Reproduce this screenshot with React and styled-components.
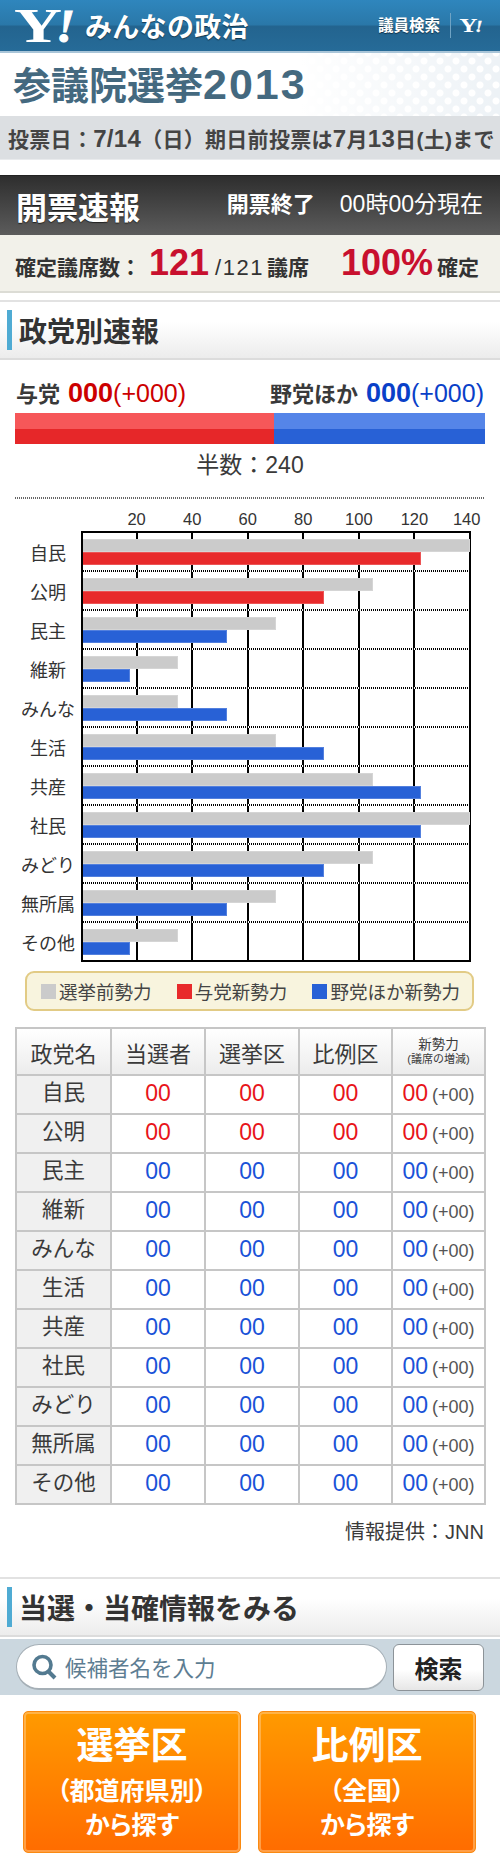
import React from 'react';
import styled, { createGlobalStyle } from 'styled-components';

const GlobalStyle = createGlobalStyle`
  html, body {
    margin: 0;
    padding: 0;
    background: #fff;
  }
  body {
    width: 500px;
    font-family: "Liberation Sans", "Noto Sans CJK JP", sans-serif;
    color: #333;
  }
`;

const Page = styled.div`
  width: 500px;
  height: 1870px;
  overflow: hidden;
  background: #fff;
`;

const Header = styled.header`
  display: flex;
  align-items: center;
  justify-content: space-between;
  box-sizing: border-box;
  height: 53px;
  padding: 0 17px 0 14px;
  background: linear-gradient(to bottom, #2f86bd 0%, #2a78a9 48%, #23648f 52%, #266b98 100%);
  border-bottom: 2px solid #a9c5d8;
`;

const Brand = styled.div`
  display: flex;
  align-items: center;
  gap: 9px;
`;

const BrandName = styled.span`
  color: #fff;
  font-size: 27px;
  font-weight: 700;
  letter-spacing: 0.3px;
  text-shadow: 0 1px 1px rgba(0, 0, 0, 0.5);
`;

const HeaderLinks = styled.div`
  display: flex;
  align-items: center;
`;

const HeaderLink = styled.span`
  color: #fff;
  font-size: 15.5px;
  font-weight: 700;
  padding-right: 10px;
  margin-right: 8px;
  border-right: 1px solid #6fa3c4;
  line-height: 25px;
  text-shadow: 0 1px 1px rgba(0, 0, 0, 0.5);
`;

const TitleRow = styled.div`
  box-sizing: border-box;
  height: 63px;
  padding-left: 13px;
  display: flex;
  align-items: center;
  background-color: #edf2f6;
  background-image:
    linear-gradient(to right, #fff 60%, rgba(255, 255, 255, 0) 100%),
    radial-gradient(circle, #fff 3px, transparent 4px),
    radial-gradient(circle, #fff 3px, transparent 4px);
  background-size: 100% 100%, 16px 16px, 16px 16px;
  background-position: 0 0, 0 0, 8px 8px;
`;

const Title = styled.h1`
  margin: 0;
  font-size: 38px;
  font-weight: 700;
  color: #44697f;
  line-height: 1;
  span {
    font-size: 43px;
    letter-spacing: 2px;
  }
`;

const Notice = styled.div`
  box-sizing: border-box;
  height: 44px;
  padding-left: 8px;
  display: flex;
  align-items: center;
  background: #dcdfe2;
  border-bottom: 1px solid #e9ebed;
  font-size: 21px;
  font-weight: 700;
  letter-spacing: 0.3px;
  text-spacing-trim: space-all;
  color: #444;
  white-space: pre;
`;

const Num = styled.span`
  font-size: 24px;
`;

const ResultBar = styled.div`
  box-sizing: border-box;
  margin-top: 15px;
  height: 60px;
  padding: 0 17px 0 16px;
  display: flex;
  align-items: center;
  justify-content: space-between;
  background: linear-gradient(to bottom, #2e2e2e, #5c5c5c);
  border-top: 1px solid #222;
  color: #fff;
`;

const ResultTitle = styled.span`
  font-size: 31px;
  font-weight: 700;
  text-shadow: 0 1px 1px rgba(0, 0, 0, 0.6);
`;

const ResultState = styled.span`
  font-size: 23px;
  margin-top: -7px;
  b {
    font-size: 22px;
    margin-right: 25px;
  }
`;

const SeatBar = styled.div`
  box-sizing: border-box;
  height: 58px;
  padding: 0 21px 0 15px;
  display: flex;
  align-items: baseline;
  justify-content: space-between;
  background: #f2f1ea;
  border-bottom: 2px solid #dcdcd5;
  color: #333;
  font-size: 21px;
  font-weight: 700;
  line-height: 56px;
`;

const SeatGroup = styled.span`
  white-space: nowrap;
`;

const BigRed = styled.span`
  font-size: 36px;
  color: #c8102e;
  margin: 0 ${(p) => p.$after || 0}px 0 ${(p) => p.$gap || 0}px;
`;

const SeatOf = styled.span`
  font-size: 22px;
  font-weight: 400;
  letter-spacing: 1.5px;
  margin: 0 3px 0 6px;
`;

const SectionHead = styled.h2`
  box-sizing: border-box;
  display: flex;
  align-items: center;
  height: 60px;
  margin: ${(p) => p.$top}px 0 0;
  padding-left: 7px;
  gap: 7px;
  font-size: 28px;
  font-weight: 700;
  color: #333;
  background: linear-gradient(to bottom, #fff 35%, #ececec 100%);
  border-top: 2px solid #e2e2e2;
  border-bottom: 2px solid #dcdcdc;
  &::before {
    content: "";
    width: 5px;
    height: 40px;
    background: #4fabd3;
  }
`;

const Blocs = styled.div`
  display: flex;
  justify-content: space-between;
  align-items: baseline;
  margin: 13px 16px 0;
  height: 40px;
  font-size: 22px;
  font-weight: 700;
  color: #3a3a3a;
  line-height: 40px;
`;

const BlocCount = styled.span`
  color: ${(p) => p.$color};
  margin-left: 8px;
  b {
    font-size: 27px;
  }
  small {
    font-size: 25px;
    font-weight: 400;
  }
`;

const SeatMeter = styled.div`
  display: flex;
  margin: 0 15px;
  height: 31px;
`;

const MeterPart = styled.div`
  background: linear-gradient(
    to bottom,
    ${(p) => p.$light} 50%,
    ${(p) => p.$dark} 50%
  );
`;

const Half = styled.div`
  text-align: center;
  font-size: 23px;
  line-height: 30px;
  margin-top: 6px;
  color: #3a3a3a;
`;

const DotLine = styled.div`
  margin: 17px 15px 0;
  height: 2px;
  background: repeating-linear-gradient(to right, #666 0 1px, transparent 1px 2px);
`;

const Axis = styled.div`
  display: grid;
  grid-template-columns: repeat(7, 55.57px);
  margin: 10px 0 0 81px;
  height: 22px;
`;

const AxisLabel = styled.span`
  text-align: center;
  font-size: 16.5px;
  line-height: 20px;
  color: #333;
  transform: translateX(${(p) => (p.$last ? 24.5 : 27.8)}px);
`;

const Chart = styled.div`
  display: flex;
`;

const ChartLabels = styled.div`
  box-sizing: border-box;
  width: 81px;
  height: 431px;
  padding: 4px 6px 0 21px;
  flex: none;
`;

const ChartLabel = styled.div`
  height: 39px;
  line-height: 39px;
  text-align: center;
  font-size: 18px;
  color: #333;
  white-space: nowrap;
`;

const Plot = styled.div`
  box-sizing: border-box;
  width: 390px;
  border: 2px solid #000;
  background: repeating-linear-gradient(
    to right,
    #000 0,
    #000 1px,
    transparent 1px,
    transparent 54.57px,
    #000 54.57px,
    #000 55.57px
  );
  background-origin: border-box;
`;

const PlotRow = styled.div`
  box-sizing: border-box;
  height: ${(p) => (p.$last ? 37 : 39)}px;
  padding-top: 6px;
  background: ${(p) => (p.$last
    ? 'none'
    : 'repeating-linear-gradient(to right, #000 0 1px, #fff 1px 2px) left bottom / 100% 2px no-repeat')};
`;

const Bar = styled.div`
  height: 13px;
  box-sizing: border-box;
  background: ${(p) => p.$color};
  border: 1px solid rgba(255, 255, 255, 0.2);
  border-left: none;
`;

const Legend = styled.div`
  box-sizing: border-box;
  display: flex;
  align-items: center;
  justify-content: space-between;
  margin: 9px 26px 0 25px;
  height: 40px;
  padding: 0 12px 0 14px;
  background: #f8f4de;
  border: 2px solid #e2cb85;
  border-radius: 9px;
  font-size: 18.5px;
  color: #444;
`;

const LegendItem = styled.span`
  display: flex;
  align-items: center;
  gap: 3px;
  &::before {
    content: "";
    width: 15px;
    height: 15px;
    background: ${(p) => p.$color};
  }
`;

const Table = styled.table`
  table-layout: fixed;
  border-collapse: collapse;
  margin: 16px 0 0 15px;
  width: 469px;
  border: 2px solid #c6c6c6;
`;

const Th = styled.th`
  height: 45px;
  padding: 0;
  font-size: 22px;
  font-weight: 400;
  color: #3a3a3a;
  background: linear-gradient(to bottom, #fff, #ececec);
  border: 2px solid #c6c6c6;
`;

const ThSmall = styled.div`
  font-size: 13.5px;
  line-height: 14px;
  small {
    display: block;
    font-size: 11px;
  }
`;

const NameCell = styled.td`
  height: 33px;
  padding: 0 0 4px;
  text-align: center;
  font-size: 21.5px;
  line-height: 30px;
  color: #3a3a3a;
  background: #f0f0f0;
  border: 2px solid #c6c6c6;
`;

const Td = styled.td`
  padding: 0 0 4px;
  text-align: center;
  font-size: 23px;
  line-height: 30px;
  color: ${(p) => p.$color};
  border: 2px solid #c6c6c6;
  small {
    font-size: 18px;
    line-height: 1;
    color: #555;
    margin-left: 4px;
  }
`;

const Credit = styled.div`
  margin: 13px 16px 0 0;
  text-align: right;
  font-size: 20px;
  line-height: 28px;
  color: #3a3a3a;
`;

const SearchBand = styled.div`
  box-sizing: border-box;
  display: flex;
  justify-content: space-between;
  align-items: center;
  height: 56px;
  margin-top: 2px;
  padding: 0 16px;
  background: #cbd7df;
`;

const SearchBox = styled.div`
  box-sizing: border-box;
  display: flex;
  align-items: center;
  gap: 8px;
  width: 371px;
  height: 46px;
  padding-left: 14px;
  background: #fff;
  border: 1px solid #a5afb6;
  border-bottom-width: 2px;
  border-radius: 23px;
  font-size: 21.5px;
  color: #5d7d92;
`;

const SearchButton = styled.div`
  box-sizing: border-box;
  width: 91px;
  height: 47px;
  display: flex;
  align-items: center;
  justify-content: center;
  background: linear-gradient(to bottom, #fff 55%, #e6e6e6 100%);
  border: 1px solid #8c9398;
  border-radius: 6px;
  font-size: 24px;
  font-weight: 700;
  color: #222;
`;

const Finders = styled.div`
  display: flex;
  justify-content: space-between;
  margin: 16px 24px 0 23px;
`;

const Finder = styled.div`
  box-sizing: border-box;
  width: 218px;
  height: 142px;
  padding-top: 13px;
  text-align: center;
  color: #fff;
  background: linear-gradient(to bottom, #ff9a00 0%, #ff6c00 100%);
  border: 1px solid #fa8a10;
  border-radius: 5px;
  box-shadow: inset 0 0 0 2px rgba(255, 200, 130, 0.55);
  font-weight: 700;
  font-size: 25px;
  line-height: 34px;
  font-feature-settings: "palt";
`;

const FinderTitle = styled.div`
  font-size: 37px;
  line-height: 44px;
  margin-bottom: 5px;
  font-feature-settings: normal;
`;

const YahooLogo = ({ width, height }) => (
  <svg width={width} height={height} viewBox="0 0 62 42" overflow="visible">
    <text x="0" y="37" fontFamily="Liberation Serif" fontWeight="700" fontSize="48" fill="#fff" textLength="48" lengthAdjust="spacingAndGlyphs">Y</text>
    <text x="42" y="37" fontFamily="Liberation Serif" fontWeight="700" fontStyle="italic" fontSize="46" fill="#fff" stroke="#fff" strokeWidth="1" textLength="19" lengthAdjust="spacingAndGlyphs">!</text>
  </svg>
);

const SearchIcon = () => (
  <svg width="26" height="26" viewBox="0 0 26 26" fill="none" stroke="#537a90">
    <circle cx="11.5" cy="11" r="8.5" strokeWidth="3.6" />
    <path d="M17.5 17.5 L24 24" strokeWidth="4" />
  </svg>
);

const RED = '#e82a2b';
const BLUE = '#2861d6';
const GREY = '#cbcbcb';
// widths below are px measured from the chart's left edge
const barWidth = (v) => v * (389 / 140) - 2;

const parties = [
  { name: '自民', before: 140, after: 122.3, ruling: true },
  { name: '公明', before: 105, after: 87.4, ruling: true },
  { name: '民主', before: 70, after: 52.5 },
  { name: '維新', before: 35, after: 17.6 },
  { name: 'みんな', before: 35, after: 52.5 },
  { name: '生活', before: 70, after: 87.4 },
  { name: '共産', before: 105, after: 122.3 },
  { name: '社民', before: 140, after: 122.3 },
  { name: 'みどり', before: 105, after: 87.4 },
  { name: '無所属', before: 70, after: 52.5 },
  { name: 'その他', before: 35, after: 17.6 },
];

const ticks = [20, 40, 60, 80, 100, 120, 140];

export default function App() {
  return (
    <Page>
      <GlobalStyle />
      <Header>
        <Brand>
          <YahooLogo width={62} height={42} />
          <BrandName>みんなの政治</BrandName>
        </Brand>
        <HeaderLinks>
          <HeaderLink>議員検索</HeaderLink>
          <YahooLogo width={24} height={16} />
        </HeaderLinks>
      </Header>
      <TitleRow>
        <Title>参議院選挙<span>2013</span></Title>
      </TitleRow>
      <Notice>
        <span>投票日：<Num>7/14</Num>（日）期日前投票は<Num>7</Num>月<Num>13</Num>日(土)まで</span>
      </Notice>

      <ResultBar>
        <ResultTitle>開票速報</ResultTitle>
        <ResultState><b>開票終了</b>00時00分現在</ResultState>
      </ResultBar>
      <SeatBar>
        <SeatGroup>確定議席数：<BigRed $gap={8}>121</BigRed><SeatOf>/121</SeatOf>議席</SeatGroup>
        <SeatGroup><BigRed $after={4}>100%</BigRed>確定</SeatGroup>
      </SeatBar>

      <SectionHead $top={7}>政党別速報</SectionHead>
      <Blocs>
        <span>与党<BlocCount $color="#cc0000"><b>000</b><small>(+000)</small></BlocCount></span>
        <span>野党ほか<BlocCount $color="#0a3fc8"><b>000</b><small>(+000)</small></BlocCount></span>
      </Blocs>
      <SeatMeter>
        <MeterPart style={{ width: '55%' }} $light="#f65759" $dark="#e62729" />
        <MeterPart style={{ width: '45%' }} $light="#5585e8" $dark="#2861d6" />
      </SeatMeter>
      <Half>半数：240</Half>
      <DotLine />

      <Axis>
        {ticks.map((t) => (
          <AxisLabel key={t} $last={t === 140}>{t}</AxisLabel>
        ))}
      </Axis>
      <Chart>
        <ChartLabels>
          {parties.map((p) => <ChartLabel key={p.name}>{p.name}</ChartLabel>)}
        </ChartLabels>
        <Plot>
          {parties.map((p, i) => (
            <PlotRow key={p.name} $last={i === parties.length - 1}>
              <Bar $color={GREY} style={{ width: barWidth(p.before) }} />
              <Bar $color={p.ruling ? RED : BLUE} style={{ width: barWidth(p.after) }} />
            </PlotRow>
          ))}
        </Plot>
      </Chart>
      <Legend>
        <LegendItem $color={GREY}>選挙前勢力</LegendItem>
        <LegendItem $color={RED}>与党新勢力</LegendItem>
        <LegendItem $color={BLUE}>野党ほか新勢力</LegendItem>
      </Legend>

      <Table>
        <colgroup>
          <col style={{ width: 95 }} />
          <col style={{ width: 94 }} />
          <col style={{ width: 94 }} />
          <col style={{ width: 93 }} />
          <col style={{ width: 93 }} />
        </colgroup>
        <thead>
          <tr>
            <Th>政党名</Th>
            <Th>当選者</Th>
            <Th>選挙区</Th>
            <Th>比例区</Th>
            <Th><ThSmall>新勢力<small>(議席の増減)</small></ThSmall></Th>
          </tr>
        </thead>
        <tbody>
          {parties.map((p) => {
            const color = p.ruling ? '#e8141a' : '#1a52d8';
            return (
              <tr key={p.name}>
                <NameCell>{p.name}</NameCell>
                <Td $color={color}>00</Td>
                <Td $color={color}>00</Td>
                <Td $color={color}>00</Td>
                <Td $color={color}>00<small>(+00)</small></Td>
              </tr>
            );
          })}
        </tbody>
      </Table>
      <Credit>情報提供：JNN</Credit>

      <SectionHead $top={31}>当選・当確情報をみる</SectionHead>
      <SearchBand>
        <SearchBox>
          <SearchIcon />
          候補者名を入力
        </SearchBox>
        <SearchButton>検索</SearchButton>
      </SearchBand>
      <Finders>
        <Finder>
          <FinderTitle>選挙区</FinderTitle>
          （都道府県別）
          <br />
          から探す
        </Finder>
        <Finder>
          <FinderTitle>比例区</FinderTitle>
          （全国）
          <br />
          から探す
        </Finder>
      </Finders>
    </Page>
  );
}
